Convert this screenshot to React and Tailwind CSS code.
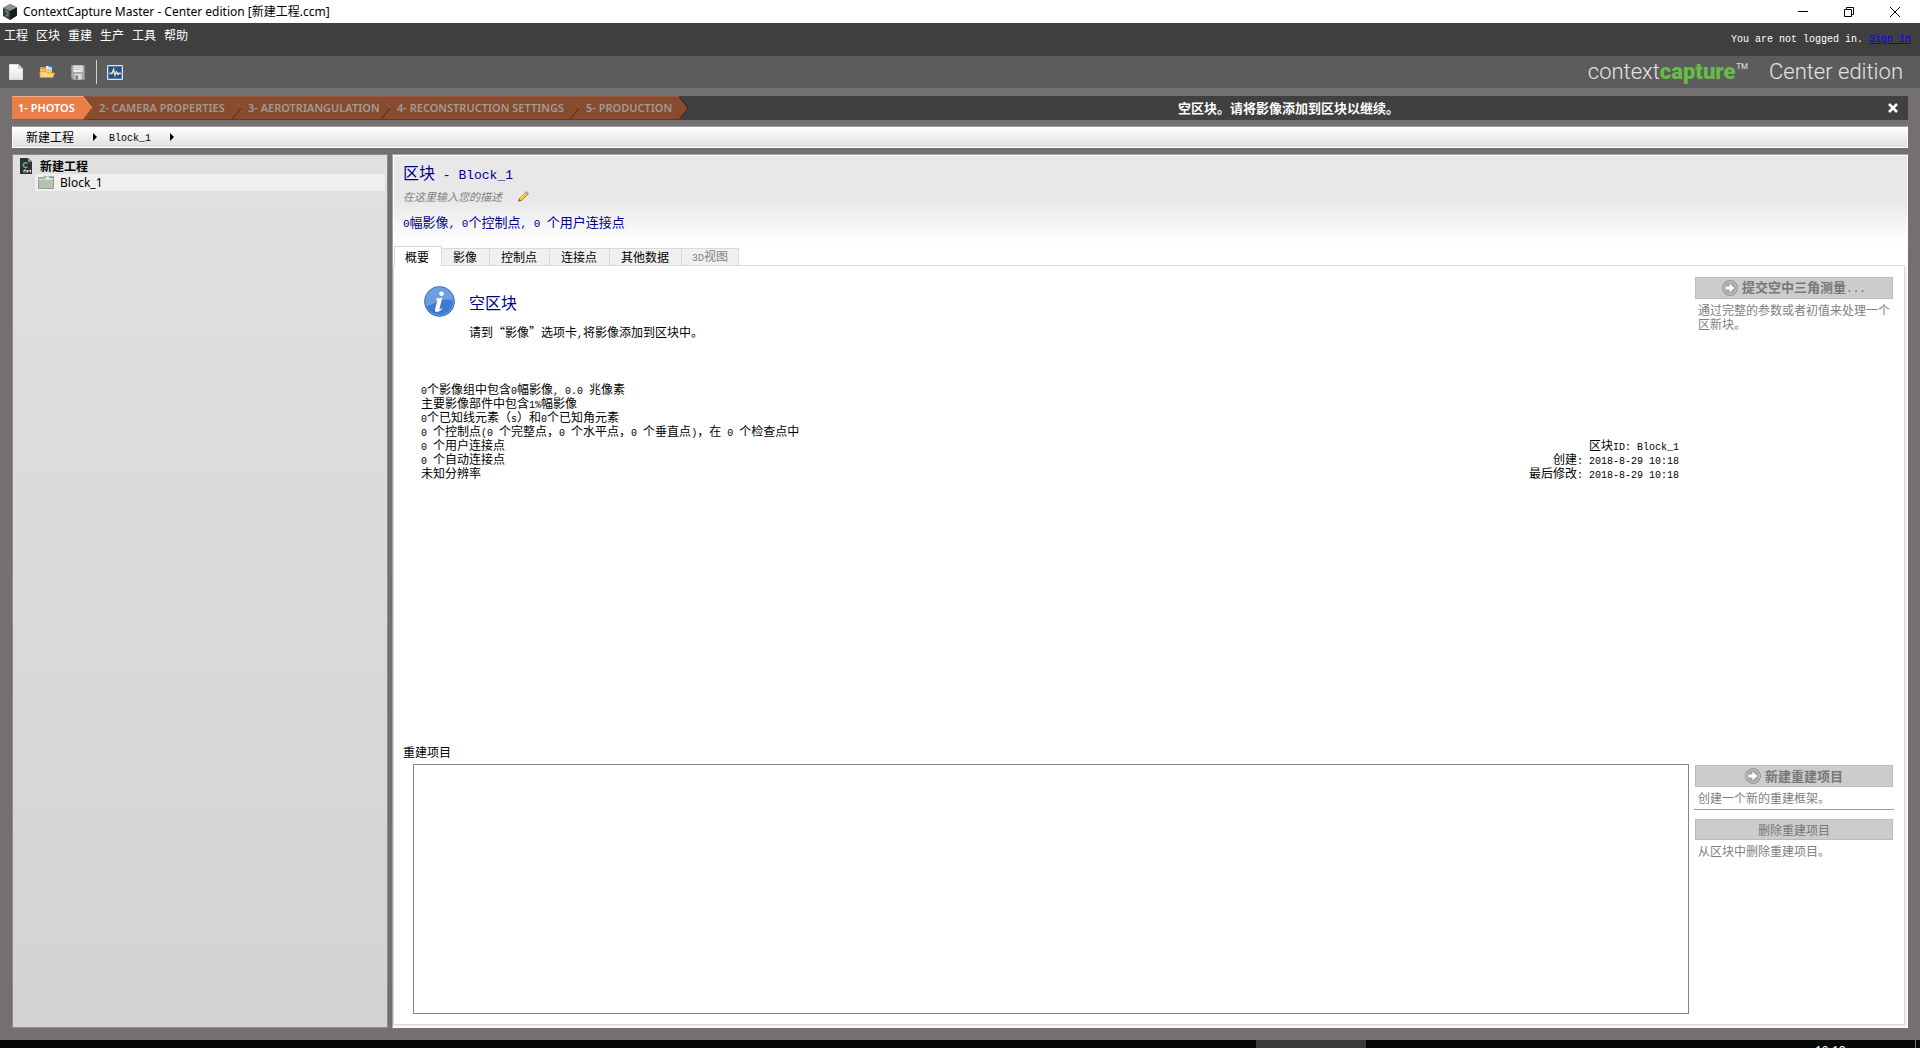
import React from "react";

const latinSizes = {
  sm: "font-['Liberation_Mono','Noto_Sans_CJK_SC',monospace] text-[10px]",
  md: "font-['Liberation_Mono','Noto_Sans_CJK_SC',monospace] text-[11px]",
  lg: "font-['Liberation_Mono','Noto_Sans_CJK_SC',monospace] text-[13px]",
};

/* Chinese text with half-width Latin runs set in a monospace face. */
function Mixed({ children, size = "sm" }) {
  const runs = children.split(/([\x20-\x7e]+)/).filter(Boolean);
  return (
    <>
      {runs.map((run, i) =>
        /^[\x20-\x7e]/.test(run) ? (
          <span key={i} className={`${latinSizes[size]} whitespace-pre`}>{run}</span>
        ) : (
          run
        )
      )}
    </>
  );
}

function AppIcon() {
  return (
    <svg width="14" height="16" viewBox="0 0 14 16" aria-hidden="true">
      <path d="M0 4 7 0l7 3.500v8L7 16 0 12z" fill="#3a3f3b" />
      <path d="M0 4 7 0l7 3.500L7 7z" fill="#858a86" />
      <path d="M7 7 14 3.500v8L7 16z" fill="#191b1a" />
      <path d="M2 7q3 0 3 2.500T2.500 12" fill="none" stroke="#5d8f5a" strokeWidth="1.500" />
      <path d="M2 4 7 1.500M4 5l5-3M7 6l5-3" stroke="#a9aeaa" strokeWidth=".6" />
    </svg>
  );
}

function NewIcon() {
  return (
    <svg width="14" height="16" viewBox="0 0 14 16" aria-hidden="true">
      <defs>
        <linearGradient id="page" x2="0" y2="1"><stop stopColor="#fff" /><stop offset="1" stopColor="#e4e4e8" /></linearGradient>
      </defs>
      <path d="M.5.5h9l4 4v11H.5z" fill="url(#page)" stroke="#dededf" />
      <path d="M9.500.5v4h4z" fill="#dcdce0" stroke="#bbb" strokeWidth=".7" />
    </svg>
  );
}

function OpenIcon() {
  return (
    <svg width="16" height="14" viewBox="0 0 16 14" aria-hidden="true">
      <path d="M1 2h5l1 1.500h6V12H1z" fill="#d9a63d" />
      <path d="M7 1h6v3H7z" fill="#eef6fb" />
      <path d="M9.500 1H13v1.500H9.500z" fill="#2b9be0" />
      <path d="M1 4.500h12V12H1z" fill="#f3cd6b" />
      <path d="M1 6.500h6L9 8h6.500L14 12.500H1z" fill="#f5d67f" stroke="#d39a2c" strokeWidth=".7" />
    </svg>
  );
}

function SaveIcon() {
  return (
    <svg width="14" height="15" viewBox="0 0 14 15" aria-hidden="true">
      <path d="M.5.5h13v14H2L.5 13z" fill="#a9a9a9" stroke="#8e8e8e" />
      <path d="M2.500.5h9v6.500h-9z" fill="#ededed" />
      <path d="M3.500 2.500h7M3.500 4.500h7" stroke="#c4c4c4" />
      <path d="M3.500 9h7v5.500h-7z" fill="#dedede" />
      <path d="M4.500 10.500H7v4H4.500z" fill="#777" />
    </svg>
  );
}

function MonitorIcon() {
  return (
    <svg width="16" height="15" viewBox="0 0 16 15" aria-hidden="true">
      <path d="M.5.5h15v14H.5z" fill="#21508c" stroke="#dfe4ea" />
      <path d="M1.500 1.500h13v12h-13z" fill="none" stroke="#8196b5" strokeWidth=".6" />
      <path d="M8 2v11M2 7.500h12" stroke="#4274ae" />
      <path d="M2.500 8.500h2.500l1.500-4L8 10l1.500-3 1.500 2.500 1-1h2" fill="none" stroke="#e0e9ae" strokeWidth="1.400" />
    </svg>
  );
}

function Chevron({ kind }) {
  const left = kind === "active" ? "#e97e48" : "#874b2d";
  const back = kind === "last" ? "#404040" : "#874b2d";
  return (
    <svg width="10" height="24" viewBox="0 0 10 24" className="shrink-0" aria-hidden="true">
      <path d="M0 0h10v24H0z" fill={back} />
      {kind !== "last" && <path d="M0 .5h10" stroke="#9b5547" />}
      {kind !== "last" && <path d="M0 23.500h10" stroke="#6b3520" />}
      <path d="M0 0 9 12 0 24z" fill={left} />
      <path d="M0 .5 9 12" fill="none" stroke={kind === "last" ? "#291f1b" : kind === "active" ? "#e9a080" : "#9d5249"} />
      <path d="M9 12 0 23.500" fill="none" stroke={kind === "active" ? "#a55a35" : "#4f2a1c"} />
    </svg>
  );
}

function ProjectIcon() {
  return (
    <svg width="12" height="16" viewBox="0 0 12 16" aria-hidden="true">
      <path d="M0 0h8l4 3.500V16H0z" fill="#2f3130" />
      <path d="M8 0v4h4z" fill="#909492" />
      <path d="M7.500 5.500a2.400 2.400 0 1 0 0 3.200" fill="none" stroke="#63b56a" strokeWidth="1.500" />
      <path d="M4 14.500v-2.500h2v2.500M7.500 14.500V12l1.300 1.300L10.500 12v2.500" fill="none" stroke="#d8d8d8" />
    </svg>
  );
}

function BlockIcon() {
  return (
    <svg width="16" height="13" viewBox="0 0 16 13" aria-hidden="true">
      <path d="M.5 1.500h5l1-1h9v12H.5z" fill="#b4beac" stroke="#93a08f" />
      <path d="M8 .5h7v3H8z" fill="#e5f1f5" />
      <path d="M11 .7h4v1.300h-4z" fill="#38a6dd" />
      <path d="M1 3.500h14V12H1z" fill="#b5c2ae" />
      <path d="M1 3.500h14" stroke="#cdd6c8" />
    </svg>
  );
}

function PencilIcon() {
  return (
    <svg width="11" height="11" viewBox="0 0 11 11" aria-hidden="true">
      <path d="M1 8 7.500 1.500l2 2L3 10z" fill="#f5c518" stroke="#a8751b" strokeWidth=".8" />
      <path d="M2 7.800 8 2" stroke="#fff09b" />
      <path d="m7.500 1.500 1-1L10.500 2.500l-1 1z" fill="#c9b7b7" stroke="#6b6160" strokeWidth=".6" />
      <path d="m0 10.800 1-3L3 10z" fill="#b34c23" />
    </svg>
  );
}

function InfoIcon() {
  return (
    <svg width="31" height="31" viewBox="0 0 31 31" aria-hidden="true">
      <circle cx="15.500" cy="15.500" r="15" fill="#3c7bd3" stroke="#3c6fbb" strokeWidth=".8" />
      <circle cx="15.500" cy="15.500" r="13.800" fill="none" stroke="#6d9fe3" strokeWidth=".8" />
      <path d="M1.700 15.500a13.800 13.800 0 0 1 27.600-1Q20 12 12.500 16T2.500 20q-.8-2-.8-4.500z" fill="#6d9ee2" />
      <circle cx="17.500" cy="7.800" r="2.300" fill="#fff" />
      <path d="m12.500 12.500 5.800-.8-2.800 11q-.3 1.600 2.300-.4l.5.700q-3 3-5.300 3-2.700 0-1.800-3.500l2-7.500q.3-1.300-1.500-1.500z" fill="#fff" />
    </svg>
  );
}

function GoIcon() {
  return (
    <svg width="16" height="16" viewBox="0 0 16 16" className="shrink-0" aria-hidden="true">
      <circle cx="8" cy="8" r="7.400" fill="#a2a2a2" stroke="#8c8c8c" />
      <circle cx="8" cy="8" r="6.300" fill="none" stroke="#d0d0d0" />
      <path d="M3.500 6.500h4v-3L12.500 8l-5 4.500v-3h-4z" fill="#fff" />
    </svg>
  );
}

const menus = ["工程", "区块", "重建", "生产", "工具", "帮助"];

const steps = [
  { label: "1- PHOTOS", kind: "active", width: "w-[71px]" },
  { label: "2- CAMERA PROPERTIES", kind: "idle", width: "w-[139px]" },
  { label: "3- AEROTRIANGULATION", kind: "idle", width: "w-[139px]" },
  { label: "4- RECONSTRUCTION SETTINGS", kind: "idle", width: "w-[179px]" },
  { label: "5- PRODUCTION", kind: "last", width: "w-[99px]" },
];

const tabs = ["影像", "控制点", "连接点", "其他数据"];

const stats = [
  "0个影像组中包含0幅影像, 0.0 兆像素",
  "主要影像部件中包含1%幅影像",
  "0个已知线元素（s）和0个已知角元素",
  "0 个控制点(0 个完整点，0 个水平点，0 个垂直点)，在 0 个检查点中",
  "0 个用户连接点",
  "0 个自动连接点",
  "未知分辨率",
];

const details = ["区块ID: Block_1", "创建: 2018-8-29 10:18", "最后修改: 2018-8-29 10:18"];

function TitleBar() {
  return (
    <header className="flex h-[23px] shrink-0 items-center bg-white pl-[3px] pr-5">
      <AppIcon />
      <h1 className="ml-1.5 font-['Noto_Sans','Noto_Sans_CJK_SC',sans-serif] text-[12px] leading-4 text-black">
        ContextCapture Master - Center edition [新建工程.ccm]
      </h1>
      <div className="ml-auto flex items-center gap-9">
        <button aria-label="Minimize">
          <svg width="10" height="10" viewBox="0 0 10 10"><path d="M0 4.500h10" stroke="#000" /></svg>
        </button>
        <button aria-label="Restore">
          <svg width="10" height="10" viewBox="0 0 10 10" fill="none" stroke="#000"><path d="M.5 2.500h7v7h-7zM2.500 2.500v-2h7v7h-2" /></svg>
        </button>
        <button aria-label="Close">
          <svg width="10" height="10" viewBox="0 0 10 10"><path d="m0 0 10 10M10 0 0 10" stroke="#000" /></svg>
        </button>
      </div>
    </header>
  );
}

function StepBar() {
  return (
    <div className="flex h-6 shrink-0 items-center bg-[#404040]">
      <nav className="flex" aria-label="Workflow">
        {steps.map((s) => (
          <React.Fragment key={s.label}>
            <button
              className={`${s.width} h-6 whitespace-nowrap border-y pl-[6px] text-left font-['Noto_Sans',sans-serif] text-[11px] font-semibold leading-[22px] ${
                s.kind === "active"
                  ? "border-t-[#f5a987] border-b-[#a8532d] bg-[#e97e48] text-white"
                  : "border-t-[#9b5547] border-b-[#6b3520] bg-[#874b2d] text-[#a09a97]"
              }`}
            >
              {s.label}
            </button>
            <Chevron kind={s.kind} />
          </React.Fragment>
        ))}
      </nav>
      <p className="flex-1 text-center text-[13px] font-bold text-white">空区块。请将影像添加到区块以继续。</p>
      <button aria-label="Dismiss" className="mr-2.5">
        <svg width="10" height="10" viewBox="0 0 10 10"><path d="m1 1 8 8M9 1 1 9" stroke="#fff" strokeWidth="2.600" /></svg>
      </button>
    </div>
  );
}

function CrumbArrow() {
  return <svg width="4" height="8" viewBox="0 0 4 8" aria-hidden="true"><path d="m0 0 4 4-4 4z" fill="#000" /></svg>;
}

function ActionButton({ icon, children }) {
  return (
    <button
      disabled
      className={`flex w-full items-center justify-center gap-1 border border-[#bbb] bg-[#ccc] text-[#777] ${
        icon ? "h-[22px] text-[13px] font-bold" : "h-[21px] text-[12px]"
      }`}
    >
      {icon && <GoIcon />}
      <span><Mixed size="md">{children}</Mixed></span>
    </button>
  );
}

export default function App() {
  return (
    <div className="flex h-screen flex-col overflow-hidden bg-[#757070] font-['Noto_Sans_CJK_SC',sans-serif] text-[12px] leading-[14px] text-black">
      <TitleBar />

      <div className="flex h-[33px] shrink-0 justify-between bg-[#3f3f3f] text-white">
        <nav className="flex gap-2 pl-1 pt-1" aria-label="Main menu">
          {menus.map((m) => (
            <button key={m} className="h-4">{m}</button>
          ))}
        </nav>
        <p className="flex gap-1.5 pr-[9px] pt-2.5 font-['Liberation_Mono',monospace] text-[10px]">
          You are not logged in.
          <a href="#signin" className="text-[#0000ff] underline">Sign in</a>
        </p>
      </div>

      <div className="flex h-8 shrink-0 items-center bg-[#5c5c5c] pl-[9px] pr-[17px]">
        <button aria-label="New"><NewIcon /></button>
        <button aria-label="Open" className="ml-4"><OpenIcon /></button>
        <button aria-label="Save" className="ml-4"><SaveIcon /></button>
        <span className="ml-[11px] h-6 w-px bg-[#d0d0d0]" />
        <button aria-label="Monitor" className="ml-2.5"><MonitorIcon /></button>
        <p className="ml-auto flex font-['Roboto',sans-serif] text-[22px] font-light leading-6 text-[#e4e4e4]">
          context<span className="font-black text-[#66bc46]">capture</span>
          <span>™</span>
          <span className="ml-5">Center edition</span>
        </p>
      </div>

      <div className="flex min-h-0 flex-1 flex-col px-3 pb-3 pt-2">
        <StepBar />

        <nav aria-label="Breadcrumb" className="mt-1.5 flex h-[22px] shrink-0 items-center border border-t-[#a09d9d] border-white bg-linear-to-b from-white to-[#dfdfdf] pl-[13px]">
          <a href="#project">新建工程</a>
          <span className="ml-[19px]"><CrumbArrow /></span>
          <a href="#block" className="ml-3"><Mixed>Block_1</Mixed></a>
          <span className="ml-[19px]"><CrumbArrow /></span>
        </nav>

        <div className="mt-1.5 flex min-h-0 flex-1 gap-1">
          <aside className="w-[376px] shrink-0 border border-[#8b8b8e] bg-linear-to-b from-[#e0e0e0] to-[#d3d3d3] pl-[7px] pr-0.5 pt-0.5">
            <div className="flex h-[17px] items-center gap-2 font-bold">
              <ProjectIcon />
              新建工程
            </div>
            <button className="ml-[15px] flex h-[17px] w-[350px] items-center gap-1.5 bg-[#efefef] pl-[3px] font-['Noto_Sans',sans-serif] text-[12px]">
              <BlockIcon />
              Block_1
            </button>
          </aside>

          <main className="flex min-w-0 flex-1 flex-col border border-r-white border-b-white border-l-[#a3a1a1] border-t-[#a3a1a1] bg-white">
            <div className="h-[110px] shrink-0 border-l border-t border-white bg-linear-to-b from-[#e8e8e8] from-40% to-white to-80%">
              <div className="flex h-full flex-col pl-[9px]">
                <h2 className="mt-1.5 text-[16px] leading-5 text-[#00008b]"><Mixed size="lg">区块 - Block_1</Mixed></h2>
                <div className="mt-0.5 flex h-4 items-center gap-4 text-[11px] italic text-[#808080]">
                  在这里输入您的描述
                  <button aria-label="Edit description"><PencilIcon /></button>
                </div>
                <p className="mt-2.5 text-[13px] leading-4 text-[#00008b]"><Mixed size="md">0幅影像, 0个控制点, 0 个用户连接点</Mixed></p>
                <div className="mt-auto -ml-[9px] flex items-end" role="tablist">
                  <button role="tab" aria-selected="true" className="relative z-10 -mb-px h-5 border border-b-0 border-[#d9d9d9] bg-white pl-2.5 pr-3">概要</button>
                  {tabs.map((t) => (
                    <button key={t} role="tab" aria-selected="false" className="h-[17px] border-r border-t border-[#d9d9d9] bg-[#f0f0f0] pl-[11px] pr-3">{t}</button>
                  ))}
                  <button role="tab" disabled className="h-[17px] border-r border-t border-[#d9d9d9] bg-[#f0f0f0] px-2.5 text-[#838383]"><Mixed>3D视图</Mixed></button>
                </div>
              </div>
            </div>

            <div className="mr-0.5 flex min-h-0 flex-1 flex-col border border-[#d9d9d9] shadow-[2px_2px_0_#f0f0f0]">
              <section className="flex gap-1.5 pr-[11px] pt-[11px]">
                <div className="flex-1 pb-[265px] pl-[27px] pr-[10px]">
                  <div className="flex gap-3.5 pl-[3px] pt-[9px]">
                    <InfoIcon />
                    <div>
                      <h3 className="mt-1.5 text-[16px] leading-5 text-[#00008b]">空区块</h3>
                      <p className="mt-[13px]"><Mixed>请到“影像”选项卡,将影像添加到区块中。</Mixed></p>
                    </div>
                  </div>
                  <div className="mt-10 flex items-end justify-between">
                    <ul>{stats.map((s) => <li key={s} className="h-3.5"><Mixed>{s}</Mixed></li>)}</ul>
                    <ul className="text-right">{details.map((s) => <li key={s} className="h-3.5"><Mixed>{s}</Mixed></li>)}</ul>
                  </div>
                </div>
                <div className="w-[198px] shrink-0">
                  <ActionButton icon>提交空中三角测量...</ActionButton>
                  <p className="px-[3px] pt-1 text-[#808080]">通过完整的参数或者初值来处理一个区新块。</p>
                </div>
              </section>

              <section className="flex min-h-0 flex-1 flex-col pb-2.5 pl-[9px] pr-[11px]">
                <h3 id="recon">重建项目</h3>
                <div className="mt-[5px] flex min-h-0 flex-1 gap-1.5 pl-2.5">
                  <div role="listbox" aria-labelledby="recon" className="flex-1 border border-[#84848c]" />
                  <div className="w-[198px] shrink-0 pt-px">
                    <ActionButton icon>新建重建项目</ActionButton>
                    <p className="px-[3px] pt-1 text-[#808080]">创建一个新的重建框架。</p>
                    <hr className="mb-[9px] mt-1 -mx-px border-[#a0a0a0]" />
                    <ActionButton>删除重建项目</ActionButton>
                    <p className="px-[3px] pt-1 text-[#808080]">从区块中删除重建项目。</p>
                  </div>
                </div>
              </section>
            </div>
            <div className="h-0.5 shrink-0" />
          </main>
        </div>
      </div>

      <footer className="flex h-2 shrink-0 justify-end overflow-hidden bg-[#070908]">
        <span className="mr-[449px] h-2 w-[110px] shrink-0 bg-[#3b3b3b]" />
        <time className="mr-[70px] w-[30px] shrink-0 pt-[3px] text-center font-['Noto_Sans',sans-serif] text-[12px] leading-4 text-white">10:18</time>
        <span className="mr-1 h-2 w-px bg-[#777]" />
      </footer>
    </div>
  );
}
